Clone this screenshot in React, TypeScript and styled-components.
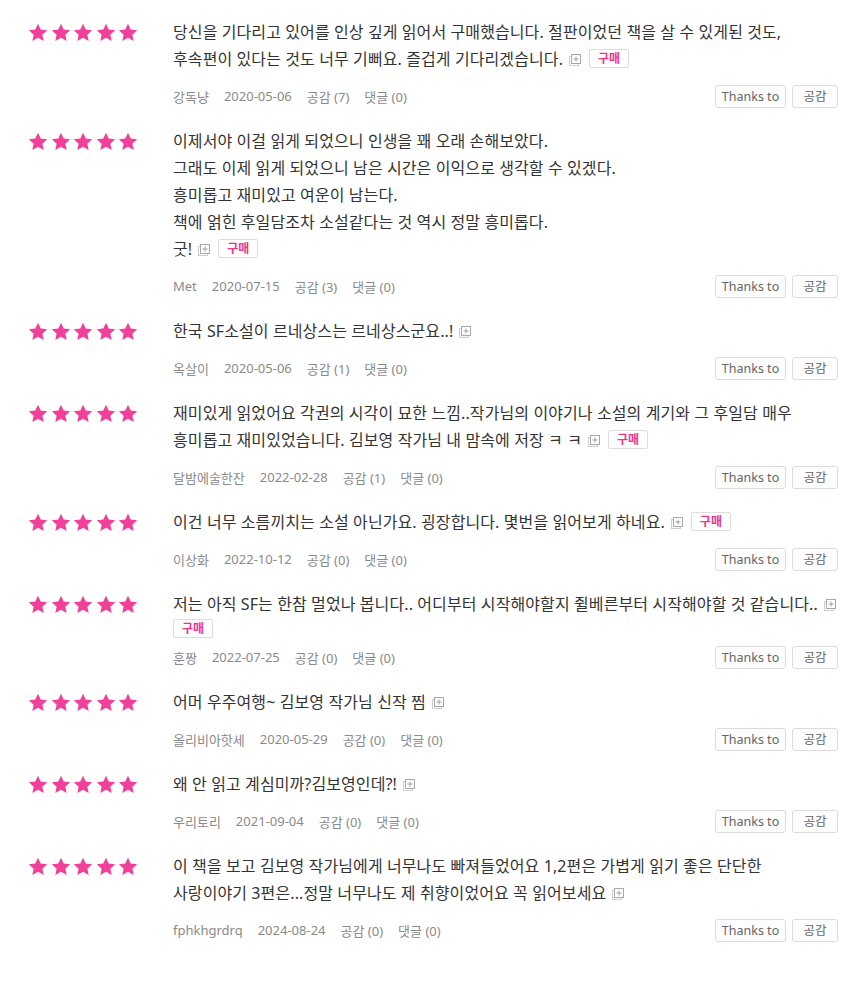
import React from "react";
import styled, { createGlobalStyle } from "styled-components";

const GlobalStyle = createGlobalStyle`
  html, body { margin: 0; padding: 0; background: #ffffff; }
  body {
    font-family: "Noto Sans", "Noto Sans CJK KR", sans-serif;
    color: #333333;
  }
`;

type Review = {
  lines: string[];
  buy: boolean;
  badgeBreak?: boolean;
  user: string;
  date: string;
  likes: number;
  comments: number;
};

const reviews: Review[] = [
  {
    lines: [
      "당신을 기다리고 있어를 인상 깊게 읽어서 구매했습니다. 절판이었던 책을 살 수 있게된 것도,",
      "후속편이 있다는 것도 너무 기뻐요. 즐겁게 기다리겠습니다.",
    ],
    buy: true,
    user: "강독냥",
    date: "2020-05-06",
    likes: 7,
    comments: 0,
  },
  {
    lines: [
      "이제서야 이걸 읽게 되었으니 인생을 꽤 오래 손해보았다.",
      "그래도 이제 읽게 되었으니 남은 시간은 이익으로 생각할 수 있겠다.",
      "흥미롭고 재미있고 여운이 남는다.",
      "책에 얽힌 후일담조차 소설같다는 것 역시 정말 흥미롭다.",
      "굿!",
    ],
    buy: true,
    user: "Met",
    date: "2020-07-15",
    likes: 3,
    comments: 0,
  },
  {
    lines: ["한국 SF소설이 르네상스는 르네상스군요..!"],
    buy: false,
    user: "옥살이",
    date: "2020-05-06",
    likes: 1,
    comments: 0,
  },
  {
    lines: [
      "재미있게 읽었어요 각권의 시각이 묘한 느낌..작가님의 이야기나 소설의 계기와 그 후일담 매우",
      "흥미롭고 재미있었습니다. 김보영 작가님 내 맘속에 저장 ㅋ ㅋ",
    ],
    buy: true,
    user: "달밤에술한잔",
    date: "2022-02-28",
    likes: 1,
    comments: 0,
  },
  {
    lines: ["이건 너무 소름끼치는 소설 아닌가요. 굉장합니다. 몇번을 읽어보게 하네요."],
    buy: true,
    user: "이상화",
    date: "2022-10-12",
    likes: 0,
    comments: 0,
  },
  {
    lines: ["저는 아직 SF는 한참 멀었나 봅니다.. 어디부터 시작해야할지 쥘베른부터 시작해야할 것 같습니다.."],
    buy: true,
    badgeBreak: true,
    user: "훈짱",
    date: "2022-07-25",
    likes: 0,
    comments: 0,
  },
  {
    lines: ["어머 우주여행~ 김보영 작가님 신작 찜"],
    buy: false,
    user: "올리비아핫세",
    date: "2020-05-29",
    likes: 0,
    comments: 0,
  },
  {
    lines: ["왜 안 읽고 계심미까?김보영인데?!"],
    buy: false,
    user: "우리토리",
    date: "2021-09-04",
    likes: 0,
    comments: 0,
  },
  {
    lines: [
      "이 책을 보고 김보영 작가님에게 너무나도 빠져들었어요 1,2편은 가볍게 읽기 좋은 단단한",
      "사랑이야기 3편은...정말 너무나도 제 취향이었어요 꼭 읽어보세요",
    ],
    buy: false,
    user: "fphkhgrdrq",
    date: "2024-08-24",
    likes: 0,
    comments: 0,
  },
];

const List = styled.div`
  padding: 9px 18px 20px 28px;
`;

const Row = styled.div`
  display: flex;
  align-items: flex-start;
  padding: 10px 0 11px;
`;

const Stars = styled.div`
  flex: none;
  width: 145px;
  height: 27px;
  display: flex;
  align-items: center;
  gap: 2.5px;
`;

const Body = styled.div`
  flex: 1;
  min-width: 0;
`;

const Content = styled.div`
  font-size: 16px;
  line-height: 27px;
  letter-spacing: 0.1px;
  color: #333333;
  white-space: nowrap;
`;

const Line = styled.div``;

const ExpandIcon = styled.svg`
  display: inline-block;
  vertical-align: -1px;
  margin: 0 0 0 6px;
`;

const Badge = styled.span<{ $block?: boolean }>`
  display: inline-block;
  box-sizing: border-box;
  height: 19px;
  margin-left: ${(p) => (p.$block ? "0" : "8px")};
  padding: 0 8px;
  border: 1px solid #dddddd;
  border-radius: 2px;
  background: #ffffff;
  color: #e8358e;
  font-size: 12px;
  font-weight: 600;
  letter-spacing: 0;
  line-height: 17px;
  vertical-align: 2px;
`;

const BadgeLine = styled.div`
  height: 15px;
  padding-top: 1px;
  line-height: 19px;
`;

const Meta = styled.div`
  display: flex;
  align-items: center;
  justify-content: space-between;
  height: 22px;
  margin-top: 12px;
`;

const MetaInfo = styled.div`
  display: flex;
  gap: 15px;
  font-size: 13px;
  color: #8a8a8a;
`;

const Buttons = styled.div`
  display: flex;
  gap: 6px;
`;

const Button = styled.button<{ $w: number }>`
  box-sizing: border-box;
  width: ${(p) => p.$w}px;
  height: 23px;
  padding: 0;
  border: 1px solid #dcdcdc;
  border-radius: 3px;
  background: #fdfdfd;
  color: #666666;
  font-family: "Noto Sans", "Noto Sans CJK KR", sans-serif;
  font-size: 12.5px;
  line-height: 21px;
  cursor: pointer;
`;

const Star = () => (
  <svg width="20" height="19" viewBox="0 0 24 23">
    <path
      d="M12 0.8l3.3 7.1 7.8 0.9-5.8 5.3 1.6 7.7L12 17.9l-6.9 3.9 1.6-7.7-5.8-5.3 7.8-0.9z"
      fill="#f0409a"
    />
  </svg>
);

const Expand = () => (
  <ExpandIcon width="12" height="12" viewBox="0 0 12 12">
    <rect x="0.5" y="2.5" width="9" height="9" fill="none" stroke="#cfcfcf" />
    <rect x="2.5" y="0.5" width="9" height="9" fill="#ffffff" stroke="#a8a8a8" />
    <path d="M7 2.5v5M4.5 5h5" stroke="#a0a0a0" strokeWidth="1" />
  </ExpandIcon>
);

export default function App() {
  return (
    <>
      <GlobalStyle />
      <List>
        {reviews.map((r, i) => (
          <Row key={i}>
            <Stars>
              {[0, 1, 2, 3, 4].map((s) => (
                <Star key={s} />
              ))}
            </Stars>
            <Body>
              <Content>
                {r.lines.map((l, j) => (
                  <Line key={j}>
                    {l}
                    {j === r.lines.length - 1 && (
                      <>
                        <Expand />
                        {r.buy && !r.badgeBreak && <Badge>구매</Badge>}
                      </>
                    )}
                  </Line>
                ))}
                {r.buy && r.badgeBreak && (
                  <BadgeLine>
                    <Badge $block>구매</Badge>
                  </BadgeLine>
                )}
              </Content>
              <Meta>
                <MetaInfo>
                  <span>{r.user}</span>
                  <span>{r.date}</span>
                  <span>공감 ({r.likes})</span>
                  <span>댓글 ({r.comments})</span>
                </MetaInfo>
                <Buttons>
                  <Button $w={71}>Thanks to</Button>
                  <Button $w={46}>공감</Button>
                </Buttons>
              </Meta>
            </Body>
          </Row>
        ))}
      </List>
    </>
  );
}
